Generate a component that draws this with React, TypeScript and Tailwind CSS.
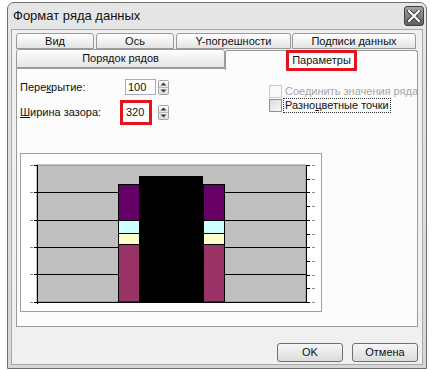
import React from "react";

function Spinner() {
  return (
    <div className="w-[11px] h-[15px] border border-[#a3a3a3] rounded-[2px] flex flex-col bg-[#f4f4f4]">
      <div className="flex-1 flex items-center justify-center bg-linear-to-b from-[#fdfdfd] to-[#e6e6e6] border-b border-[#b8b8b8]">
        <svg width="7" height="4" viewBox="0 0 7 4"><path d="M0.5 3.5 L3.5 0.5 L6.5 3.5 Z" fill="#3a3a3a" /></svg>
      </div>
      <div className="flex-1 flex items-center justify-center bg-linear-to-b from-[#f1f1f1] to-[#dadada]">
        <svg width="7" height="4" viewBox="0 0 7 4"><path d="M0.5 0.5 L3.5 3.5 L6.5 0.5 Z" fill="#3a3a3a" /></svg>
      </div>
    </div>
  );
}

function Checkbox({ disabled }: { disabled?: boolean }) {
  return (
    <div
      className={
        disabled
          ? "w-[13px] h-[13px] shrink-0 border border-[#c9c9c9] bg-[#fafafa]"
          : "w-[13px] h-[13px] shrink-0 border border-[#8e8f8f] bg-linear-to-br from-[#dcdcdc] to-[#f8f8f8]"
      }
    />
  );
}

function Chart() {
  const gy = [11, 38, 66, 93, 120, 148];
  const minor: number[] = [];
  for (let i = 0; i <= 10; i++) minor.push(Math.round(11 + i * 13.7));
  return (
    <svg width="300" height="157" viewBox="0 0 300 157" className="block">
      <rect x="16" y="11" width="269" height="137" fill="#c0c0c0" stroke="#8a8a8a" strokeWidth="1" />
      {gy.slice(1).map((y) => (
        <line key={y} x1="16" x2="285" y1={y + 0.5} y2={y + 0.5} stroke="#000" strokeWidth="1" />
      ))}
      <line x1="16.5" x2="16.5" y1="11" y2="150" stroke="#000" strokeWidth="1" />
      <line x1="285.5" x2="285.5" y1="11" y2="149" stroke="#000" strokeWidth="1" />
      {gy.map((y) => (
        <g key={"l" + y}>
          <rect x="9" y={y} width="3" height="1" fill="#8c8c8c" />
          <rect x="13" y={y} width="3" height="1" fill="#000" />
        </g>
      ))}
      {minor.map((y) => (
        <g key={"r" + y}>
          <rect x="286" y={y} width="3" height="1" fill="#000" />
          <rect x="291" y={y} width="3" height="1" fill="#8c8c8c" />
        </g>
      ))}
      {[97, 182].map((x) => (
        <g key={"b" + x} stroke="#000" strokeWidth="1">
          <rect x={x + 0.5} y="30.5" width="21" height="36" fill="#660066" />
          <rect x={x + 0.5} y="66.5" width="21" height="13" fill="#ccffff" />
          <rect x={x + 0.5} y="79.5" width="21" height="11" fill="#ffffcc" />
          <rect x={x + 0.5} y="90.5" width="21" height="57.5" fill="#993366" />
        </g>
      ))}
      <rect x="118" y="22" width="64" height="126" fill="#000" />
    </svg>
  );
}

export default function App() {
  const tab =
    "h-full flex items-center justify-center border border-[#9a9a9a] rounded-t-[3px] bg-linear-to-b from-[#ffffff] to-[#e4e4e4] text-[11px] text-[#111] whitespace-nowrap";
  return (
    <div className="w-[434px] h-[370px] bg-white pt-[2px] pl-[7px] font-['Liberation_Sans',Arial,sans-serif] text-[#111] overflow-hidden">
      <div className="w-[420px] h-[367px] border border-[#6f6f6f] rounded-t-[7px] bg-linear-to-b from-[#e6e6e6] to-[#d6d6d6] flex flex-col">
        {/* title bar */}
        <div className="h-[26px] flex items-center justify-between pl-[5px] pr-[2px] shrink-0">
          <span className="text-[13px] leading-none text-[#111] -mt-[2px]">Формат ряда данных</span>
          <div className="w-[20px] h-[20px] rounded-[3px] border border-[#3f3f3f] bg-linear-to-b from-[#a4a4a4] to-[#5e5e5e] flex items-center justify-center">
            <svg width="14" height="12" viewBox="0 0 14 12">
              <path d="M2 1 L12 11 M12 1 L2 11" stroke="#3a3a3a" strokeWidth="4" strokeLinecap="round" />
              <path d="M2 1 L12 11 M12 1 L2 11" stroke="#ffffff" strokeWidth="2.2" strokeLinecap="round" />
            </svg>
          </div>
        </div>
        {/* body */}
        <div className="flex-1 mx-[3px] mb-[3px] border border-[#a9a9a9] bg-[#f0f0f0] pt-[3px] pl-[4px] pr-[3px] flex flex-col">
          {/* tabs row 1 */}
          <div className="h-[16px] flex">
            <div className={tab + " w-[78px]"}>Вид</div>
            <div className={tab + " w-[78px] ml-[2px]"}>Ось</div>
            <div className={tab + " w-[115px] ml-[2px]"}>Y-погрешности</div>
            <div className={tab + " w-[124px] ml-[1px]"}>Подписи данных</div>
          </div>
          {/* tabs row 2 */}
          <div className="h-[19px] flex relative z-10">
            <div className={tab + " w-[209px]"}>Порядок рядов</div>
            <div className="w-[193px] h-[20px] mt-[1px] bg-[#fcfcfc] border border-b-0 border-[#9a9a9a] rounded-t-[3px] flex items-center justify-center">
              <div className="border-[3px] border-[#e4131b] rounded-[1px] px-[3px] h-[21px] -mt-[1px] flex items-center text-[11px] bg-white whitespace-nowrap">
                Параметры
              </div>
            </div>
          </div>
          {/* panel */}
          <div className="w-[402px] h-[259px] border border-[#9a9a9a] bg-[#fcfcfc] pt-[10px] pl-[3px] flex flex-col">
            <div className="flex items-start h-[46px]">
              <div className="w-[249px] shrink-0 flex flex-col">
                <div className="h-[16px] flex items-center text-[11px]">
                  <span className="w-[105px] whitespace-nowrap">
                    Пере<span className="underline">к</span>рытие:
                  </span>
                  <div className="w-[31px] h-[16px] border border-[#a5acb5] bg-white flex items-center pl-[2px] text-[11px]">
                    100
                  </div>
                  <div className="ml-[2px]">
                    <Spinner />
                  </div>
                </div>
                <div className="h-[25px] mt-[5px] flex items-center text-[11px]">
                  <span className="w-[100px] whitespace-nowrap">
                    <span className="underline">Ш</span>ирина зазора:
                  </span>
                  <div className="w-[32px] h-[25px] border-[3px] border-[#e4131b] bg-white flex items-center pl-[3px] text-[11px]">
                    320
                  </div>
                  <div className="ml-[6px]">
                    <Spinner />
                  </div>
                </div>
              </div>
              <div className="flex flex-col pt-[5px] shrink-0">
                <div className="h-[14px] flex items-center">
                  <Checkbox disabled />
                  <span className="ml-[1px] border border-transparent px-[1px] text-[11px] leading-[13px] text-[#a4a4a4] whitespace-nowrap">
                    Соединить значения ряда
                  </span>
                </div>
                <div className="h-[14px] flex items-center">
                  <Checkbox />
                  <span className="ml-[1px] border border-dotted border-[#333] px-[1px] text-[11px] leading-[13px] whitespace-nowrap">
                    Разно<span className="underline">ц</span>ветные точки
                  </span>
                </div>
              </div>
            </div>
            <div className="mt-[28px] w-[302px] h-[159px] border border-[#a0a0a0] bg-white">
              <Chart />
            </div>
          </div>
          {/* buttons */}
          <div className="flex justify-end mt-[16px] pr-[1px]">
            <button className="w-[66px] h-[19px] border border-[#707070] rounded-[3px] bg-linear-to-b from-[#f6f6f6] to-[#dcdcdc] text-[11px] flex items-center justify-center">
              OK
            </button>
            <button className="w-[66px] h-[19px] ml-[9px] border border-[#707070] rounded-[3px] bg-linear-to-b from-[#f6f6f6] to-[#dcdcdc] text-[11px] flex items-center justify-center">
              Отмена
            </button>
          </div>
        </div>
      </div>
    </div>
  );
}
